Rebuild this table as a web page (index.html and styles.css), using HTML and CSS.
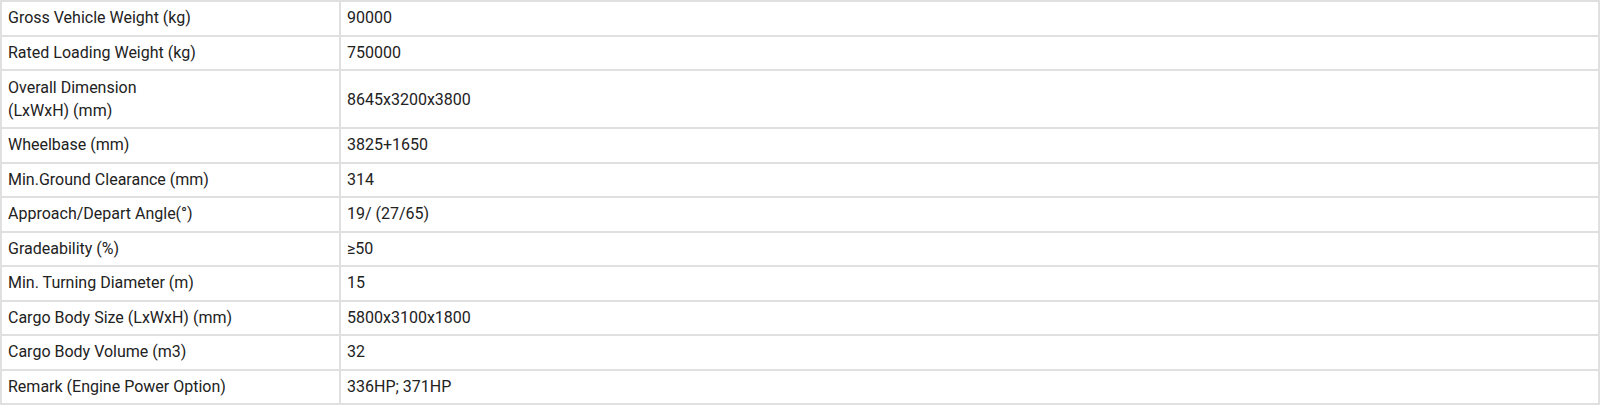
FILE: index.html
```html
<!DOCTYPE html>
<html>
<head>
<meta charset="utf-8">
<link rel="stylesheet" href="styles.css">
</head>
<body>
<table class="spec">
<tbody>
<tr><td class="k">Gross Vehicle Weight (kg)</td><td>90000</td></tr>
<tr><td class="k">Rated Loading Weight (kg)</td><td>750000</td></tr>
<tr class="tall"><td class="k">Overall Dimension<br>(LxWxH) (mm)</td><td>8645x3200x3800</td></tr>
<tr><td class="k">Wheelbase (mm)</td><td>3825+1650</td></tr>
<tr><td class="k">Min.Ground Clearance (mm)</td><td>314</td></tr>
<tr><td class="k">Approach/Depart Angle(°)</td><td>19/ (27/65)</td></tr>
<tr><td class="k">Gradeability (%)</td><td>≥50</td></tr>
<tr><td class="k">Min. Turning Diameter (m)</td><td>15</td></tr>
<tr><td class="k">Cargo Body Size (LxWxH) (mm)</td><td>5800x3100x1800</td></tr>
<tr><td class="k">Cargo Body Volume (m3)</td><td>32</td></tr>
<tr><td class="k">Remark (Engine Power Option)</td><td>336HP; 371HP</td></tr>
</tbody>
</table>
</body>
</html>
```
FILE: styles.css
```css
html, body {
  margin: 0;
  padding: 0;
  background: #fff;
}
.spec {
  width: 1600px;
  border-collapse: collapse;
  font-family: Roboto, "Liberation Sans", sans-serif;
  font-size: 16px;
  color: #222;
}
.spec td {
  border: 2px solid #e0e0e0;
  padding: 6px 6px;
  line-height: 20.5px;
  vertical-align: middle;
  text-align: left;
}
.spec td.k {
  width: 325px;
}
.spec tr.tall td {
  line-height: 23px;
  padding-top: 5px;
  padding-bottom: 5px;
}
```
